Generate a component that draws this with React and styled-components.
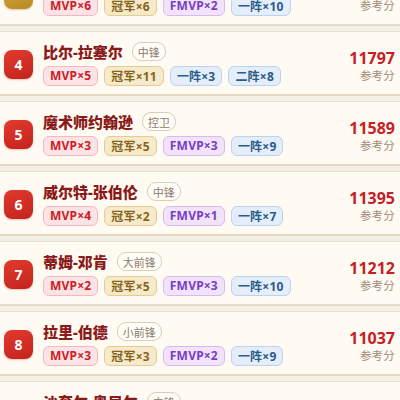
import React from 'react';
import styled, { createGlobalStyle } from 'styled-components';

const GlobalStyle = createGlobalStyle`
	html, body {
		margin: 0;
		padding: 0;
		background: #f4efe7;
		overflow: hidden;
	}
	body {
		font-family: "Noto Sans", "Noto Sans CJK SC", sans-serif;
	}
`;

const List = styled.ol`
	list-style: none;
	margin: -39px 0 0;
	padding: 0;
	display: flex;
	flex-direction: column;
	gap: 5px;
`;

const Card = styled.li`
	box-sizing: border-box;
	display: flex;
	align-items: center;
	height: 65px;
	padding: 0 5px 0 4px;
	background: #fffbf3;
	border-top: 1px solid #e9dfcf;
	border-bottom: 2px solid #e6d8c1;
`;

const Rank = styled.div`
	flex: none;
	width: 29px;
	height: 29px;
	margin-top: 3px;
	border-radius: 8px;
	display: flex;
	align-items: center;
	justify-content: center;
	color: #fff;
	font-weight: 700;
	font-size: 14px;
	background: ${ p => p.gold
		? 'linear-gradient(160deg, #d8ad3c, #b88a22)'
		: 'linear-gradient(160deg, #e23a2e, #c3231d)' };
	box-shadow: 0 1px 2px rgba(140, 30, 20, 0.25);
`;

const Body = styled.div`
	flex: 1;
	min-width: 0;
	margin-left: 10px;
	display: flex;
	flex-direction: column;
	gap: 3px;
`;

const NameRow = styled.div`
	display: flex;
	align-items: center;
	height: 22px;
`;

const Name = styled.span`
	font-size: 15px;
	font-weight: 800;
	color: #8a1a1a;
`;

const Position = styled.span`
	margin-left: 9px;
	height: 17px;
	padding: 0 5px;
	border: 1px solid #dccdb6;
	border-radius: 9px;
	display: flex;
	align-items: center;
	font-size: 11px;
	color: #8c7b6c;
	background: #fffdf8;
`;

const Tags = styled.div`
	display: flex;
	gap: 6px;
`;

const tagColors = {
	mvp: [ '#fde3e5', '#f3b9bf', '#c92128' ],
	champ: [ '#f6eacb', '#e2cd92', '#86651b' ],
	fmvp: [ '#f1e3fc', '#d7baf3', '#7a3ec4' ],
	team: [ '#e4eefa', '#bcd2ed', '#2d5b89' ],
};

const Tag = styled.span`
	height: 20px;
	box-sizing: border-box;
	padding: 0 6px;
	border-radius: 6px;
	display: flex;
	align-items: center;
	font-size: 12px;
	font-weight: 700;
	letter-spacing: 0.2px;
	background: ${ p => tagColors[ p.kind ][ 0 ] };
	border: 1px solid ${ p => tagColors[ p.kind ][ 1 ] };
	color: ${ p => tagColors[ p.kind ][ 2 ] };
`;

const Score = styled.div`
	flex: none;
	margin-top: 5px;
	display: flex;
	flex-direction: column;
	align-items: flex-end;
`;

const Points = styled.span`
	font-size: 16px;
	font-weight: 700;
	color: #c62027;
	line-height: 20px;
`;

const Label = styled.span`
	font-size: 11.5px;
	color: #a08b7b;
	line-height: 16px;
	letter-spacing: 0.2px;
`;

const players = [
	{ rank: 3, name: '卡里姆-贾巴尔', pos: '中锋', score: 12000, tags: [ [ 'mvp', 'MVP×6' ], [ 'champ', '冠军×6' ], [ 'fmvp', 'FMVP×2' ], [ 'team', '一阵×10' ] ] },
	{ rank: 4, name: '比尔-拉塞尔', pos: '中锋', score: 11797, tags: [ [ 'mvp', 'MVP×5' ], [ 'champ', '冠军×11' ], [ 'team', '一阵×3' ], [ 'team', '二阵×8' ] ] },
	{ rank: 5, name: '魔术师约翰逊', pos: '控卫', score: 11589, tags: [ [ 'mvp', 'MVP×3' ], [ 'champ', '冠军×5' ], [ 'fmvp', 'FMVP×3' ], [ 'team', '一阵×9' ] ] },
	{ rank: 6, name: '威尔特-张伯伦', pos: '中锋', score: 11395, tags: [ [ 'mvp', 'MVP×4' ], [ 'champ', '冠军×2' ], [ 'fmvp', 'FMVP×1' ], [ 'team', '一阵×7' ] ] },
	{ rank: 7, name: '蒂姆-邓肯', pos: '大前锋', score: 11212, tags: [ [ 'mvp', 'MVP×2' ], [ 'champ', '冠军×5' ], [ 'fmvp', 'FMVP×3' ], [ 'team', '一阵×10' ] ] },
	{ rank: 8, name: '拉里-伯德', pos: '小前锋', score: 11037, tags: [ [ 'mvp', 'MVP×3' ], [ 'champ', '冠军×3' ], [ 'fmvp', 'FMVP×2' ], [ 'team', '一阵×9' ] ] },
	{ rank: 9, name: '沙奎尔-奥尼尔', pos: '中锋', score: 10924, tags: [ [ 'mvp', 'MVP×1' ], [ 'champ', '冠军×4' ], [ 'fmvp', 'FMVP×3' ], [ 'team', '一阵×8' ] ] },
];

export default function App() {
	return (
		<>
			<GlobalStyle />
			<List>
				{ players.map( p => (
					<Card key={ p.rank }>
						<Rank gold={ p.rank === 3 }>{ p.rank }</Rank>
						<Body>
							<NameRow>
								<Name>{ p.name }</Name>
								<Position>{ p.pos }</Position>
							</NameRow>
							<Tags>
								{ p.tags.map( ( [ kind, text ], i ) => (
									<Tag key={ i } kind={ kind }>{ text }</Tag>
								) ) }
							</Tags>
						</Body>
						<Score>
							<Points>{ p.score }</Points>
							<Label>参考分</Label>
						</Score>
					</Card>
				) ) }
			</List>
		</>
	);
}
